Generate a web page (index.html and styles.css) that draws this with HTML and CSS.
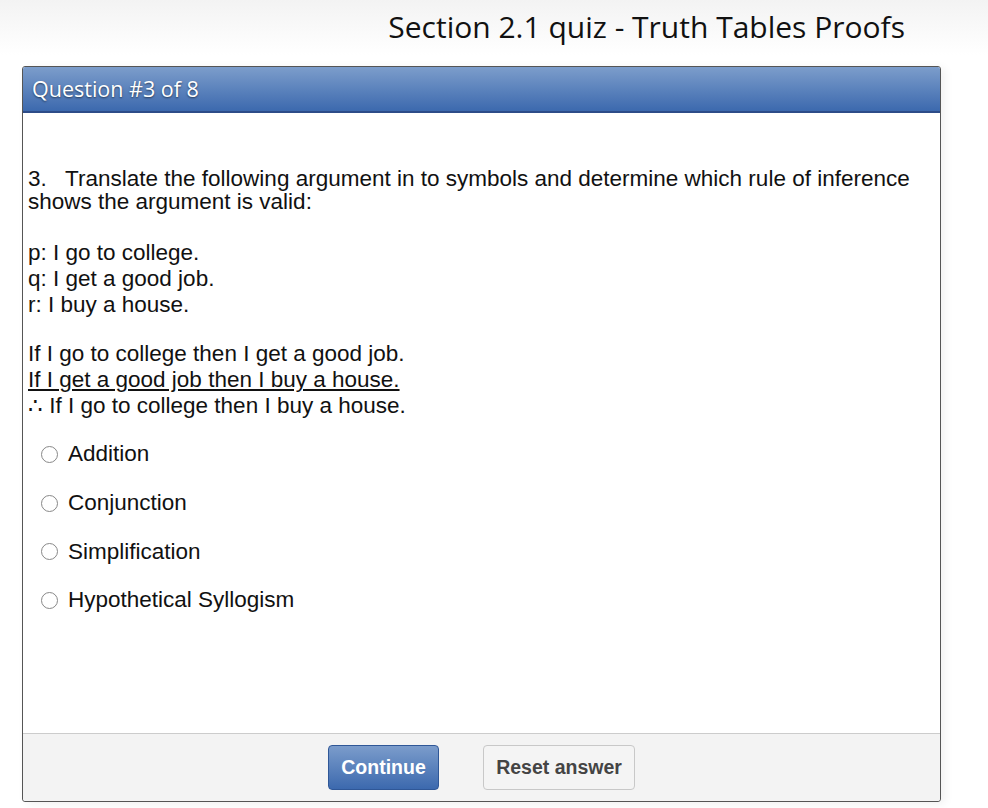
FILE: index.html
```html
<!DOCTYPE html>
<html lang="en">
<head>
  <meta charset="utf-8">
  <title>Section 2.1 quiz - Truth Tables Proofs</title>
  <link rel="stylesheet" href="styles.css">
</head>
<body>
  <h1 class="quiz-title">Section 2.1 quiz - Truth Tables Proofs</h1>

  <div class="quiz-panel">
    <div class="quiz-head">Question #3 of 8</div>

    <div class="quiz-body">
      <p class="stem">3.&nbsp;&nbsp; Translate the following argument in to symbols and determine which rule of inference shows the argument is valid:</p>
      <p class="lines">p: I go to college.<br>q: I get a good job.<br>r: I buy a house.</p>
      <p class="lines">If I go to college then I get a good job.<br><u>If I get a good job then I buy a house.</u><br>&there4; If I go to college then I buy a house.</p>

      <ul class="choices">
        <li><label><input type="radio" name="q3"> Addition</label></li>
        <li><label><input type="radio" name="q3"> Conjunction</label></li>
        <li><label><input type="radio" name="q3"> Simplification</label></li>
        <li><label><input type="radio" name="q3"> Hypothetical Syllogism</label></li>
      </ul>
    </div>

    <div class="quiz-foot">
      <button class="btn btn-primary">Continue</button>
      <button class="btn btn-reset">Reset answer</button>
    </div>
  </div>
</body>
</html>
```

FILE: styles.css
```css
body {
  margin: 0;
  background: linear-gradient(#f3f3f3, #fff 55px) no-repeat;
  min-height: 808px;
}

.quiz-title {
  margin: 0;
  padding: 7px 83px 0 0;
  text-align: right;
  font-family: "Open Sans", sans-serif;
  font-weight: normal;
  font-size: 30px;
  line-height: 40px;
  color: #111;
}

.quiz-panel {
  margin: 19px 0 0 22px;
  width: 917px;
  border: 1px solid #555;
  border-radius: 3px;
  box-shadow: 4px 2px 10px rgba(0,0,0,0.06);
  background: #fff;
}

.quiz-head {
  height: 44px;
  padding-left: 9px;
  background: linear-gradient(#7c9dcb, #3c69ae);
  border-bottom: 2px solid #2d4c88;
  font-family: "Open Sans", sans-serif;
  font-size: 21.5px;
  line-height: 44px;
  color: #fff;
  text-shadow: 0 1px 2px rgba(0,0,0,0.55);
  border-radius: 2px 2px 0 0;
}

.quiz-body {
  height: 566px;
  padding: 54px 20px 0 5px;
  font-family: "Liberation Sans", Arial, sans-serif;
  font-size: 22.5px;
  color: #111;
}

.quiz-body p {
  margin: 0 0 27px;
  line-height: 23px;
}
.quiz-body p.lines {
  line-height: 26px;
  margin-bottom: 23px;
}
.quiz-body u {
  text-underline-offset: 2px;
}

.choices {
  list-style: none;
  margin: -12px 0 0;
  padding: 0 0 0 13px;
}
.choices li {
  height: 48.7px;
  display: flex;
  align-items: center;
}
.choices label {
  display: flex;
  align-items: center;
  gap: 10px;
}
.choices input {
  appearance: none;
  margin: 0;
  width: 17px;
  height: 17px;
  border: 1.5px solid #888;
  border-radius: 50%;
  background: #fff;
}

.quiz-foot {
  height: 68px;
  border-top: 1px solid #ccc;
  background: #f3f3f3;
  display: flex;
  justify-content: center;
  align-items: flex-start;
  gap: 44px;
  padding-top: 11px;
  box-sizing: border-box;
  border-radius: 0 0 3px 3px;
}

.btn {
  height: 45px;
  border-radius: 4px;
  font-family: "Liberation Sans", Arial, sans-serif;
  font-weight: bold;
  font-size: 19.5px;
  padding: 0;
  white-space: nowrap;
}
.btn-primary {
  width: 111px;
  background: linear-gradient(#7b9ccb, #3c69ae);
  border: 1px solid #2f5797;
  color: #fff;
}
.btn-reset {
  width: 152px;
  background: #f4f4f4;
  border: 1px solid #c8c8c8;
  color: #444;
}
```
